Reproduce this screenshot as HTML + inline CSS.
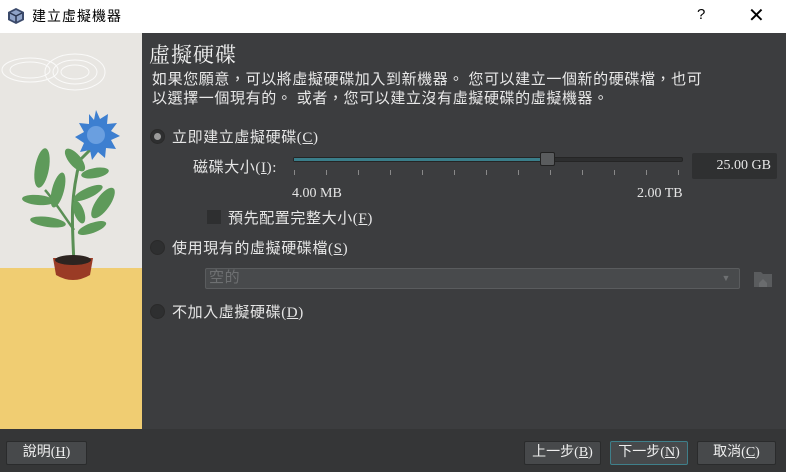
<!DOCTYPE html>
<html><head><meta charset="utf-8"><style>
*{margin:0;padding:0;box-sizing:border-box}
body{width:786px;height:472px;overflow:hidden;background:#3c3d3f;font-family:"Liberation Serif","Noto Sans CJK TC",sans-serif;font-size:15px;letter-spacing:.6px;color:#e6e6e6;position:relative}
.abs{position:absolute;white-space:nowrap}
#title{left:0;top:0;width:786px;height:33px;background:#fff;color:#000;font-size:14px}
#left{left:0;top:33px;width:142px;height:396px;background:#e8e6e2}
#bottom{left:0;top:429px;width:786px;height:43px;background:#353637}
.radio{width:15px;height:15px;border-radius:50%;background:#2e2f30;border:1px solid #2a2a2a}
.btn{height:24px;border:1px solid #2a2b2c;background:#47494b;border-radius:2px;color:#eee;text-align:center;line-height:22px;font-size:14px;letter-spacing:0}
u{text-decoration:underline}
</style></head><body>
<div id="title" class="abs">
 <svg class="abs" style="left:7px;top:7px" width="18" height="18" viewBox="0 0 18 18"><path d="M9 1L17 5V13L9 17L1 13V5Z" fill="#3b4a6b"/><path d="M9 3L15 6V12L9 15L3 12V6Z" fill="#8fa3c8"/><path d="M9 9L15 6M9 9L3 6M9 9V15" stroke="#2a3550" stroke-width="1.5"/></svg>
 <div class="abs" style="left:32px;top:6px;letter-spacing:1px;font-size:14px;font-family:'Noto Sans CJK TC',sans-serif">建立虛擬機器</div>
 <div class="abs" style="left:697px;top:6px;font-size:15px;font-family:'Liberation Sans',sans-serif">?</div>
 <div class="abs" style="left:748px;top:3px;font-size:20px;font-family:'DejaVu Sans',sans-serif">✕</div>
</div>
<div id="left" class="abs">
 <div class="abs" style="left:0;top:235px;width:142px;height:161px;background:#f0cd72"></div>
 <svg class="abs" style="left:0;top:0" width="142" height="260" viewBox="0 33 142 260">
  <g fill="none" stroke="#fff" stroke-width="1" opacity=".8">
   <ellipse cx="30" cy="70" rx="28" ry="12"/><ellipse cx="30" cy="70" rx="20" ry="8"/><ellipse cx="75" cy="72" rx="30" ry="18"/><ellipse cx="75" cy="72" rx="22" ry="12"/><ellipse cx="75" cy="72" rx="14" ry="7"/>
  </g>
  <path d="M74 264 C72 220 70 200 80 160 L90 150" stroke="#5a8f55" stroke-width="3" fill="none"/>
  <path d="M74 230 C60 210 50 195 45 190" stroke="#5a8f55" stroke-width="2.5" fill="none"/>
  <g fill="#5e9a5a">
   <ellipse cx="42" cy="168" rx="7" ry="20" transform="rotate(10 42 168)"/>
   <ellipse cx="58" cy="190" rx="6" ry="18" transform="rotate(15 58 190)"/>
   <ellipse cx="38" cy="200" rx="16" ry="5" transform="rotate(5 38 200)"/>
   <ellipse cx="48" cy="222" rx="18" ry="5" transform="rotate(8 48 222)"/>
   <ellipse cx="75" cy="160" rx="6" ry="14" transform="rotate(-40 75 160)"/>
   <ellipse cx="95" cy="173" rx="14" ry="5" transform="rotate(-10 95 173)"/>
   <ellipse cx="88" cy="193" rx="16" ry="5" transform="rotate(-25 88 193)"/>
   <ellipse cx="103" cy="203" rx="7" ry="18" transform="rotate(35 103 203)"/>
   <ellipse cx="79" cy="212" rx="5" ry="12" transform="rotate(-20 79 212)"/>
   <ellipse cx="92" cy="228" rx="15" ry="5" transform="rotate(-20 92 228)"/>
  </g>
  <polygon fill="#3d7fd0" points="96,110 100,119 108,114 107,124 117,123 111,131 120,136 111,140 116,149 106,148 105,158 98,152 92,160 90,150 80,152 84,143 75,137 84,132 79,123 89,124 89,114 94,120"/>
  <circle cx="96" cy="135" r="9" fill="#6a9fe0"/>
  <path d="M53 258 H93 L90 275 Q73 285 56 275 Z" fill="#9a3b25"/>
  <ellipse cx="73" cy="260" rx="18" ry="5" fill="#2d2420"/>
 </svg>
</div>
<div class="abs" style="left:149px;top:39px;font-size:21px;letter-spacing:1px;font-family:'Noto Serif CJK SC','Noto Sans CJK TC',serif;color:#f2f2f2">虛擬硬碟</div>
<div class="abs" style="left:152px;top:71px;line-height:19px;color:#e8e8e8">如果您願意，可以將虛擬硬碟加入到新機器。 您可以建立一個新的硬碟檔，也可<br>以選擇一個現有的。 或者，您可以建立沒有虛擬硬碟的虛擬機器。</div>
<div class="abs radio" style="left:150px;top:129px"><div style="width:7px;height:7px;border-radius:50%;background:#9a9a9a;margin:3px"></div></div>
<div class="abs" style="left:172px;top:126px">立即建立虛擬硬碟(<u>C</u>)</div>
<div class="abs" style="left:193px;top:156px">磁碟大小(<u>I</u>):</div>
<div class="abs" style="left:293px;top:157px;width:390px;height:5px;background:#2d2e2f;border:1px solid #252525;border-radius:2px"></div>
<div class="abs" style="left:294px;top:158px;width:252px;height:3px;background:#3a7e8a"></div>
<div class="abs" style="left:540px;top:152px;width:15px;height:14px;background:#5a5c5e;border:1px solid #222;border-radius:2px"></div>
<svg class="abs" style="left:293px;top:170px" width="392" height="6"><g stroke="#888" stroke-width="1">
<line x1="1.5" y1="0" x2="1.5" y2="5"/><line x1="33.5" y1="0" x2="33.5" y2="5"/><line x1="65.5" y1="0" x2="65.5" y2="5"/><line x1="97.5" y1="0" x2="97.5" y2="5"/><line x1="129.5" y1="0" x2="129.5" y2="5"/><line x1="161.5" y1="0" x2="161.5" y2="5"/><line x1="193.5" y1="0" x2="193.5" y2="5"/><line x1="225.5" y1="0" x2="225.5" y2="5"/><line x1="257.5" y1="0" x2="257.5" y2="5"/><line x1="289.5" y1="0" x2="289.5" y2="5"/><line x1="321.5" y1="0" x2="321.5" y2="5"/><line x1="353.5" y1="0" x2="353.5" y2="5"/><line x1="385.5" y1="0" x2="385.5" y2="5"/></g></svg>
<div class="abs" style="left:692px;top:153px;width:85px;height:26px;background:#2f3031;border-radius:2px;text-align:right;padding-right:6px;line-height:26px;font-size:14px;letter-spacing:0">25.00 GB</div>
<div class="abs" style="left:292px;top:186px;font-size:14px;letter-spacing:0">4.00 MB</div>
<div class="abs" style="left:637px;top:186px;font-size:14px;letter-spacing:0">2.00 TB</div>
<div class="abs" style="left:207px;top:210px;width:14px;height:14px;background:#2e2f30"></div>
<div class="abs" style="left:228px;top:207px">預先配置完整大小(<u>F</u>)</div>
<div class="abs radio" style="left:150px;top:240px"></div>
<div class="abs" style="left:172px;top:237px">使用現有的虛擬硬碟檔(<u>S</u>)</div>
<div class="abs" style="left:205px;top:268px;width:535px;height:21px;background:#484a4c;border:1px solid #5a5c5e;border-radius:2px;color:#6e7072;padding-left:3px;line-height:19px">空的<span style="position:absolute;right:8px;top:0;font-size:9px">▼</span></div>
<svg class="abs" style="left:753px;top:269px" width="20" height="20"><path d="M1 3H8L10 5H19V18H1Z" fill="#5a5c5e"/><path d="M6 14L10 10L14 14V18H6Z" fill="#6a6c6e"/></svg>
<div class="abs radio" style="left:150px;top:304px"></div>
<div class="abs" style="left:172px;top:301px">不加入虛擬硬碟(<u>D</u>)</div>
<div id="bottom" class="abs"></div>
<div class="abs btn" style="left:6px;top:441px;width:81px">說明(<u>H</u>)</div>
<div class="abs btn" style="left:524px;top:441px;width:77px">上一步(<u>B</u>)</div>
<div class="abs btn" style="left:610px;top:441px;width:78px;border-color:#3f7f8a">下一步(<u>N</u>)</div>
<div class="abs btn" style="left:697px;top:441px;width:79px">取消(<u>C</u>)</div>
</body></html>
